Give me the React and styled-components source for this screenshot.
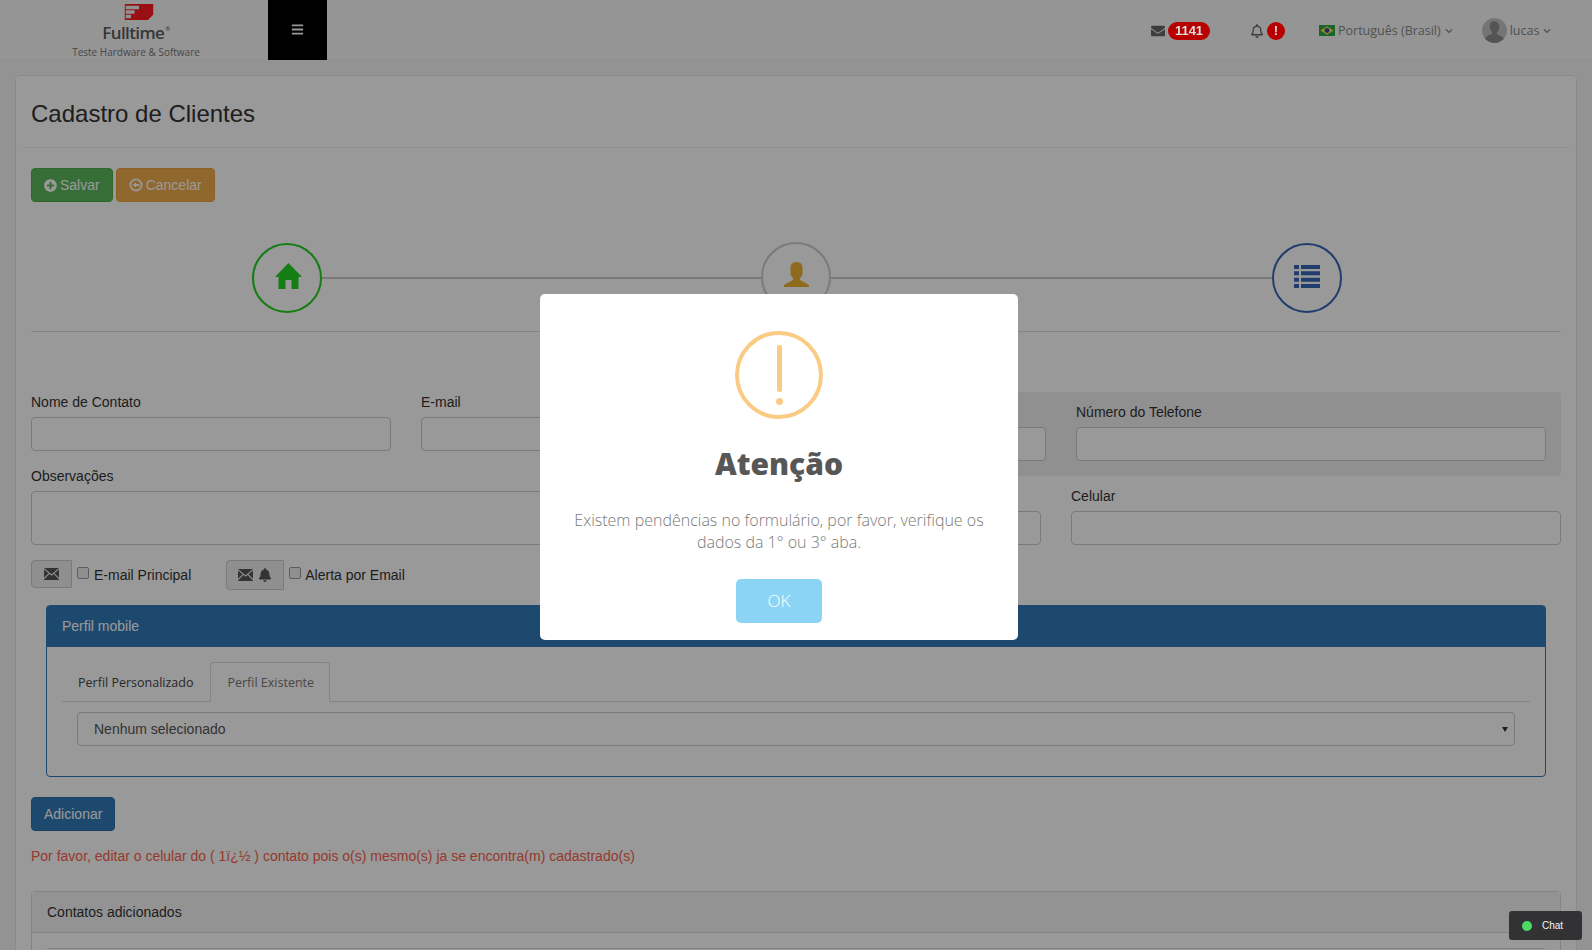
import React from 'react';
import styled, { createGlobalStyle } from 'styled-components';
import { FaEnvelope, FaChevronDown, FaRegBell, FaPlusCircle, FaBars, FaBell } from 'react-icons/fa';

const GlobalStyle = createGlobalStyle`
  html, body {
    margin: 0;
    padding: 0;
    height: 950px;
    overflow: hidden;
    background: #f6f6f6;
    font-family: "Liberation Sans", Arial, sans-serif;
    font-size: 14px;
    color: #333;
  }
  * { box-sizing: border-box; }
`;

const Overlay = styled.div`
  position: fixed;
  inset: 0;
  background: rgba(0, 0, 0, 0.4);
  z-index: 10;
`;

const Topbar = styled.header`
  height: 60px;
  display: flex;
  background: #f9f9f9;
  border-bottom: 1px solid #f2f2f2;
`;

const Brand = styled.div`
  width: 268px;
  display: flex;
  flex-direction: column;
  align-items: center;
  padding: 4px 0 0 4px;
  svg { margin-left: 5px; }
`;

const BrandName = styled.div`
  font-family: "Open Sans", sans-serif;
  font-size: 17px;
  font-weight: 600;
  line-height: 17px;
  letter-spacing: -0.6px;
  color: #5c5c5c;
  margin-top: 4px;
  sup { font-size: 6px; font-weight: 400; line-height: 0; vertical-align: 8px; margin-left: 1px; }
`;

const BrandSub = styled.div`
  font-family: "Open Sans", sans-serif;
  font-size: 10px;
  line-height: 14px;
  color: #777;
  margin-top: 4px;
`;

const MenuToggle = styled.button`
  width: 59px;
  height: 60px;
  border: 0;
  background: #000;
  color: #fff;
  display: flex;
  align-items: center;
  justify-content: center;
  padding: 0 0 2px;
  font-size: 13px;
`;

const TopNav = styled.nav`
  flex: 1;
  display: flex;
  align-items: center;
  font-family: "Open Sans", sans-serif;
  font-size: 12.5px;
  color: #888;
  padding: 2px 0 0 824px;
`;

const NavItem = styled.div`
  display: flex;
  align-items: center;
  gap: ${(p) => p.$gap || 3}px;
  margin-left: ${(p) => p.$left || 0}px;
`;

const CountBadge = styled.span`
  position: relative;
  z-index: 11;
  min-width: ${(p) => (p.$round ? 18 : 42)}px;
  height: 18px;
  border-radius: 9px;
  background: #b80000;
  color: #ddd;
  font-family: "Liberation Sans", sans-serif;
  font-size: 13px;
  font-weight: 700;
  line-height: 18px;
  text-align: center;
`;

const Chevron = styled(FaChevronDown)`
  width: 8px;
  height: 8px;
  margin-left: 1px;
`;

const Avatar = styled.span`
  width: 25px;
  height: 25px;
  border-radius: 50%;
  overflow: hidden;
  background: #c4c4c4;
  display: block;
  svg { display: block; }
`;

const Card = styled.main`
  margin: 15px 15px 0;
  height: 900px;
  background: #fff;
  border: 1px solid #e6e6e6;
  border-radius: 4px;
  padding: 0 15px;
`;

const CardHead = styled.div`
  height: 72px;
  margin: 0 -9px;
  padding: 0 9px;
  border-bottom: 1px solid #eee;
  display: flex;
  align-items: center;
`;

const Title = styled.h1`
  margin: 5px 0 0;
  font-size: 24px;
  font-weight: 400;
  color: #333;
`;

const Actions = styled.div`
  display: flex;
  gap: 3px;
  margin-top: 20px;
`;

const Button = styled.button`
  height: 34px;
  padding: 0 12px;
  border: 1px solid ${(p) => p.$border};
  border-radius: 4px;
  background: ${(p) => p.$bg};
  color: #fff;
  font-family: inherit;
  font-size: 14px;
  display: flex;
  align-items: center;
  gap: 3px;
`;

const Stepper = styled.div`
  position: relative;
  height: 130px;
  border-bottom: 1px solid #ddd;
  display: flex;
  justify-content: space-between;
  align-items: flex-start;
  padding: 41px 219px 0 221px;
`;

const StepLine = styled.div`
  position: absolute;
  left: 290px;
  right: 219px;
  top: 75px;
  height: 2px;
  background: #ccc;
`;

const Step = styled.div`
  position: relative;
  width: 70px;
  height: 70px;
  margin: ${(p) => p.$nudge || '0'};
  border-radius: 50%;
  border: 2px solid ${(p) => p.$color};
  background: #fff;
  color: ${(p) => p.$icon};
  display: flex;
  align-items: center;
  justify-content: center;
`;

const FormArea = styled.div`
  display: grid;
  grid-template-columns: 750px 1fr;
  column-gap: 15px;
  margin-top: 60px;
`;

const FieldsLeft = styled.div`
  display: grid;
  grid-template-columns: 360px 360px;
  column-gap: 30px;
  row-gap: 15px;
  align-content: start;
`;

const WideField = styled.div`
  grid-column: 1 / -1;
`;

const PhonePanel = styled.div`
  display: grid;
  grid-template-columns: 235px 470px;
  column-gap: 30px;
  padding: 10px 14px 15px 15px;
  background: #f0f0f0;
  border-radius: 4px;
`;

const CellRow = styled.div`
  display: grid;
  grid-template-columns: 245px 490px;
  column-gap: 30px;
  margin-top: 10px;
`;

const Label = styled.label`
  display: block;
  height: 20px;
  line-height: 20px;
  margin-bottom: 5px;
  font-size: 14px;
  color: #333;
`;

const Input = styled.input`
  display: block;
  width: 100%;
  height: 34px;
  border: 1px solid #ccc;
  border-radius: 4px;
  background: #fff;
`;

const TextArea = styled.textarea`
  display: block;
  width: 100%;
  height: 54px;
  border: 1px solid #ccc;
  border-radius: 4px;
  background: #fff;
  resize: none;
`;

const CheckRow = styled.div`
  display: flex;
  align-items: flex-start;
  margin-top: 15px;
`;

const Addon = styled.span`
  width: ${(p) => p.$width}px;
  height: ${(p) => p.$height}px;
  display: flex;
  align-items: center;
  justify-content: center;
  gap: 5px;
  background: #eee;
  border: 1px solid #ccc;
  border-radius: 4px 0 0 4px;
  color: #555;
`;

const Check = styled.span`
  width: 12px;
  height: 12px;
  margin: 7px 5px 0 5px;
  border: 1px solid #999;
  border-radius: 2px;
  background: #eee;
`;

const CheckText = styled.span`
  line-height: 30px;
  margin-left: ${(p) => p.$left || 0}px;
  margin-right: ${(p) => p.$right || 0}px;
  color: #333;
`;

const MobilePanel = styled.section`
  margin: 15px 15px 0;
  height: 172px;
  border: 1px solid #337ab7;
  border-radius: 4px;
`;

const MobileHead = styled.div`
  height: 41px;
  padding: 0 15px;
  line-height: 41px;
  background: #337ab7;
  color: #fff;
`;

const MobileBody = styled.div`
  padding: 15px 15px 0;
`;

const Tabs = styled.div`
  display: flex;
  height: 40px;
  border-bottom: 1px solid #ddd;
  font-family: "Open Sans", sans-serif;
  font-size: 12.5px;
`;

const Tab = styled.div`
  height: 40px;
  padding: 0 15px 0 16px;
  margin-right: 2px;
  line-height: ${(p) => (p.$active ? 39 : 41)}px;
  color: ${(p) => (p.$active ? '#777' : '#444')};
  ${(p) => p.$active && 'border: 1px solid #ddd; border-bottom-color: #fff; border-radius: 4px 4px 0 0; background: #fff;'}
`;

const SelectBox = styled.div`
  position: relative;
  height: 34px;
  margin: 10px 15px 0;
  padding: 0 16px;
  border: 1px solid #ccc;
  border-radius: 4px;
  line-height: 32px;
  color: #555;
`;

const Caret = styled.span`
  position: absolute;
  right: 6px;
  top: 14px;
  border-left: 3px solid transparent;
  border-right: 3px solid transparent;
  border-top: 5px solid #333;
`;

const AddRow = styled.div`
  display: flex;
  margin-top: 20px;
`;

const ErrorText = styled.p`
  margin: 15px 0 0;
  line-height: 20px;
  color: #f9604c;
`;

const ContactsPanel = styled.section`
  margin-top: 25px;
  border: 1px solid #ddd;
  border-radius: 4px 4px 0 0;
`;

const ContactsHead = styled.div`
  height: 41px;
  padding: 0 15px;
  line-height: 41px;
  background: #f5f5f5;
  border-bottom: 1px solid #ddd;
  color: #333;
`;

const ContactsBody = styled.div`
  margin: 15px 15px 0;
  height: 40px;
  border-top: 1px solid #ddd;
`;

const Modal = styled.div`
  position: fixed;
  z-index: 20;
  left: 540px;
  top: 294px;
  width: 478px;
  height: 346px;
  padding-top: 37px;
  background: #fff;
  border-radius: 5px;
  text-align: center;
  font-family: "Open Sans", sans-serif;
`;

const WarnIcon = styled.div`
  position: relative;
  width: 88px;
  height: 88px;
  margin: 0 auto;
  border: 4px solid #facb84;
  border-radius: 50%;
`;

const WarnBar = styled.span`
  position: absolute;
  left: 38px;
  top: 10px;
  width: 5px;
  height: 47px;
  border-radius: 2px;
  background: #facb84;
`;

const WarnDot = styled.span`
  position: absolute;
  left: 37px;
  top: 63px;
  width: 7px;
  height: 7px;
  border-radius: 50%;
  background: #facb84;
`;

const ModalTitle = styled.h2`
  margin: 25px 0 0;
  font-size: 30px;
  font-weight: 800;
  line-height: 40px;
  color: #575757;
`;

const ModalText = styled.p`
  margin: 25px 30px 0;
  font-size: 16px;
  font-weight: 300;
  line-height: 22px;
  color: #797979;
`;

const OkButton = styled.button`
  display: block;
  width: 86px;
  height: 44px;
  margin: 26px auto 0;
  padding: 0 0 2px;
  border: 0;
  border-radius: 5px;
  background: #8cd4f5;
  color: #fff;
  font-family: inherit;
  font-size: 17px;
  font-weight: 300;
`;

const ChatTab = styled.div`
  position: fixed;
  z-index: 20;
  left: 1509px;
  top: 911px;
  width: 73px;
  height: 29px;
  padding-left: 13px;
  display: flex;
  align-items: center;
  gap: 10px;
  background: #323235;
  border-radius: 3px;
  color: #f2f2f2;
  font-size: 10px;
`;

const ChatDot = styled.span`
  width: 10px;
  height: 10px;
  border-radius: 50%;
  background: #4cd964;
`;

// mail with the flap lines, as in the glyphicon used by the form addons
const MailGlyph = () => (
  <svg width="15" height="12" viewBox="0 0 15 12" fill="currentColor">
    <path d="M0 0h15L7.5 6.2zM0 1.5v8.2l4.6-4.4zM15 1.5v8.2l-4.6-4.4zM5.4 6L0 11.5V12h15v-.5L9.6 6 7.5 7.8z" />
  </svg>
);

const CancelGlyph = () => (
  <svg width="14" height="14" viewBox="0 0 14 14">
    <circle cx="7" cy="7" r="5.6" fill="none" stroke="currentColor" strokeWidth="1.8" />
    <path d="M3.8 7 7 4.3V6h3.2v2H7v1.7z" fill="currentColor" />
  </svg>
);

const HomeGlyph = () => (
  <svg width="27" height="26" viewBox="0 0 27 26" fill="currentColor" style={{ margin: '0 0 5px 2px' }}>
    <path d="M13.5 0 27 14h-3.5v12h-7v-9h-6v9h-7V14H0z" />
  </svg>
);

const UserGlyph = () => (
  <svg width="25" height="25" viewBox="0 0 25 25" fill="currentColor" style={{ marginBottom: 6 }}>
    <path d="M12.5 0C16 0 18.5 2 18.5 6v5c0 2-1 4-2.500 5v2l9 5v2H0v-2l9-5v-2c-1.500-1-2.500-3-2.500-5V6c0-4 2.500-6 6-6z" />
  </svg>
);

const ListGlyph = () => (
  <svg width="26" height="23" viewBox="0 0 26 23" fill="currentColor" style={{ marginBottom: 3 }}>
    <path d="M0 0h5v4H0zM7 0h19v4H7zM0 6.3h5v4H0zM7 6.3h19v4H7zM0 12.7h5v4H0zM7 12.7h19v4H7zM0 19h5v4H0zM7 19h19v4H7z" />
  </svg>
);

const LogoMark = () => (
  <svg width="32" height="18" viewBox="0 0 32 18">
    <path d="M0 0h32v12l-6 6H0z" fill="#ff1a22" />
    <path d="M1 2h15v4H1zM1 7h10v4H1zM1 12h6v4H1z" fill="#f4f4f4" />
  </svg>
);

const FlagBrazil = () => (
  <svg width="16" height="11" viewBox="0 0 16 11">
    <rect width="16" height="11" fill="#2fa84a" />
    <path d="M8 1.2 14.5 5.5 8 9.8 1.5 5.5z" fill="#ffe14d" />
    <circle cx="8" cy="5.5" r="2.4" fill="#2a4fa0" />
  </svg>
);

const AvatarGlyph = () => (
  <svg width="25" height="25" viewBox="0 0 25 25" fill="#8c8c8c">
    <path d="M12.5 3.5c3 0 4.8 2.2 4.8 5.3 0 2.5-1 4.500-2.300 5.700v2c3 1 6 2 7 4.500L25 25H0l3-4.500c1-2.500 4-3.500 7-4.500v-2c-1.300-1.200-2.300-3.200-2.300-5.700 0-3.100 1.800-5.300 4.800-5.300z" />
  </svg>
);

const App = () => (
  <>
    <GlobalStyle />
    <Topbar>
      <Brand>
        <LogoMark />
        <BrandName>Fulltime<sup>®</sup></BrandName>
        <BrandSub>Teste Hardware &amp; Software</BrandSub>
      </Brand>
      <MenuToggle aria-label="menu"><FaBars /></MenuToggle>
      <TopNav>
        <NavItem>
          <FaEnvelope size={14} color="#666" />
          <CountBadge>1141</CountBadge>
        </NavItem>
        <NavItem $left={40}>
          <FaRegBell size={14} color="#666" />
          <CountBadge $round>!</CountBadge>
        </NavItem>
        <NavItem $left={34}>
          <FlagBrazil />
          <span>Português (Brasil)</span>
          <Chevron />
        </NavItem>
        <NavItem $left={29}>
          <Avatar><AvatarGlyph /></Avatar>
          <span>lucas</span>
          <Chevron />
        </NavItem>
      </TopNav>
    </Topbar>

    <Card>
      <CardHead><Title>Cadastro de Clientes</Title></CardHead>
      <Actions>
        <Button $bg="#5cb85c" $border="#4cae4c"><FaPlusCircle size={13} />Salvar</Button>
        <Button $bg="#f0ad4e" $border="#eea236"><CancelGlyph />Cancelar</Button>
      </Actions>

      <Stepper>
        <StepLine />
        <Step $color="#22d022" $icon="#22d022"><HomeGlyph /></Step>
        <Step $color="#ccc" $icon="#efb030" $nudge="-1px 0 0 -2px"><UserGlyph /></Step>
        <Step $color="#3766b8" $icon="#3766b8"><ListGlyph /></Step>
      </Stepper>

      <FormArea>
        <FieldsLeft>
          <div>
            <Label>Nome de Contato</Label>
            <Input />
          </div>
          <div>
            <Label>E-mail</Label>
            <Input />
          </div>
          <WideField>
            <Label>Observações</Label>
            <TextArea />
          </WideField>
        </FieldsLeft>
        <div>
          <PhonePanel>
            <div>
              <Label>&nbsp;</Label>
              <Input />
            </div>
            <div>
              <Label>Número do Telefone</Label>
              <Input />
            </div>
          </PhonePanel>
          <CellRow>
            <div>
              <Label>&nbsp;</Label>
              <Input />
            </div>
            <div>
              <Label>Celular</Label>
              <Input />
            </div>
          </CellRow>
        </div>
      </FormArea>

      <CheckRow>
        <Addon $width={41} $height={28}><MailGlyph /></Addon>
        <Check />
        <CheckText $right={35}>E-mail Principal</CheckText>
        <Addon $width={58} $height={30}><MailGlyph /><FaBell size={14} /></Addon>
        <Check />
        <CheckText $left={-1}>Alerta por Email</CheckText>
      </CheckRow>

      <MobilePanel>
        <MobileHead>Perfil mobile</MobileHead>
        <MobileBody>
          <Tabs>
            <Tab>Perfil Personalizado</Tab>
            <Tab $active>Perfil Existente</Tab>
          </Tabs>
          <SelectBox>Nenhum selecionado<Caret /></SelectBox>
        </MobileBody>
      </MobilePanel>

      <AddRow><Button $bg="#337ab7" $border="#2e6da4">Adicionar</Button></AddRow>
      <ErrorText>Por favor, editar o celular do ( 1ï¿½ ) contato pois o(s) mesmo(s) ja se encontra(m) cadastrado(s)</ErrorText>

      <ContactsPanel>
        <ContactsHead>Contatos adicionados</ContactsHead>
        <ContactsBody />
      </ContactsPanel>
    </Card>

    <Overlay />

    <Modal>
      <WarnIcon><WarnBar /><WarnDot /></WarnIcon>
      <ModalTitle>Atenção</ModalTitle>
      <ModalText>Existem pendências no formulário, por favor, verifique os dados da 1° ou 3° aba.</ModalText>
      <OkButton>OK</OkButton>
    </Modal>

    <ChatTab><ChatDot />Chat</ChatTab>
  </>
);

export default App;
